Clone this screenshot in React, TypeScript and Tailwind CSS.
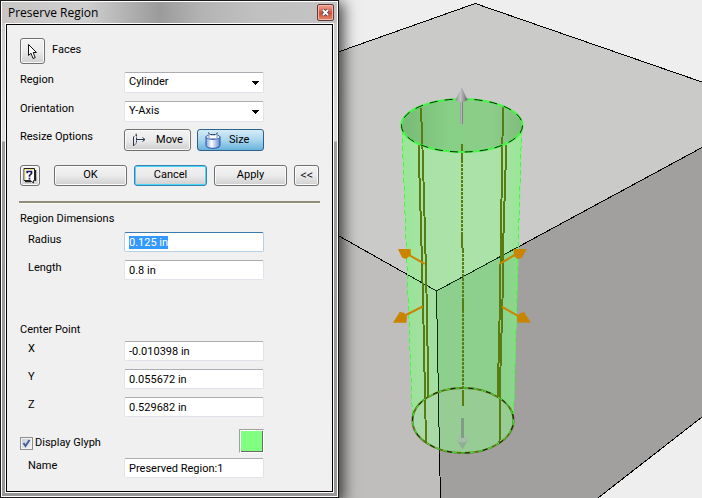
import { useEffect, useRef } from "react";
import type { ReactNode } from "react";

const fieldBorder =
  "h-5 w-full rounded-xs border border-[#e2e3ea] border-t-[#abadb3] bg-white px-1 text-[11px] leading-4 text-black outline-none";

const buttonFace =
  "flex items-center justify-center rounded-[3px] border border-[#707070] bg-linear-to-b from-[#f3f3f3] from-0% via-[#ebebeb] via-50% to-[#cfcfcf] text-[11px] text-black shadow-[inset_0_0_0_1px_#fafafa]";

function Row({ label, htmlFor, indent = false, children }: { label: string; htmlFor?: string; indent?: boolean; children: ReactNode }) {
  return (
    <div className="flex items-start">
      <label htmlFor={htmlFor} className={`w-[104px] shrink-0 leading-4 ${indent ? "pl-2" : ""}`}>
        {label}
      </label>
      <div className="w-[140px]">{children}</div>
    </div>
  );
}

function Choice({ id, options }: { id: string; options: string[] }) {
  return (
    <div className="relative">
      <select id={id} className="block h-[21px] w-full appearance-none rounded-xs border border-[#e2e3ea] border-t-[#abadb3] bg-white px-1 text-[11px] text-black outline-none">
        {options.map((o) => (
          <option key={o}>{o}</option>
        ))}
      </select>
      <svg viewBox="0 0 7 4" className="pointer-events-none absolute top-[9px] right-[5px] h-1 w-[7px]" aria-hidden="true">
        <path d="M0 0h7v1h-1v1h-1v1h-1v1h-1v-1h-1v-1h-1v-1h-1z" />
      </svg>
    </div>
  );
}

function CursorIcon() {
  return (
    <svg viewBox="0 0 11 17" className="h-[17px] w-[11px]" aria-hidden="true">
      <path d="M1.500 1.500V12.500L4 10.200L6 15.500L8.200 14.600L6.200 9.500H9.500Z" fill="#fff" stroke="#111" />
    </svg>
  );
}

function HelpIcon() {
  return (
    <svg viewBox="0 0 14 16" className="h-4 w-[14px] shrink-0" aria-hidden="true">
      <path d="M2 13.500H8M12.500 2V13" fill="none" stroke="#222" strokeWidth="1.500" />
      <path d="M1 .5H11.500V12.500H10.500V15L7.500 12.500H1Z" fill="#fff" stroke="#222" />
      <path d="M2 12V1.500H11" fill="none" stroke="#ece47c" />
      <path d="M4.200 5.200V3.500H8.500V5.500L6.500 7.500V8.700M6.500 9.800V11.500" fill="none" stroke="#15155c" strokeWidth="1.700" />
    </svg>
  );
}

function MoveIcon() {
  return (
    <svg viewBox="0 0 14 14" className="h-[14px] w-[14px] shrink-0" fill="none" stroke="#27364e" aria-hidden="true">
      <path d="M4.500 1L1.500 4v9L4.500 10z" strokeDasharray="2 1" />
      <path d="M1.500 4v9M4 6.500h9M10.500 4.500l2.500 2-2.500 2" />
    </svg>
  );
}

function SizeIcon() {
  return (
    <svg viewBox="0 0 16 17" className="h-[17px] w-4 shrink-0" aria-hidden="true">
      <defs>
        <linearGradient id="can">
          <stop offset="0" stopColor="#7fa3dc" />
          <stop offset=".4" stopColor="#fff" />
          <stop offset="1" stopColor="#5f86cf" />
        </linearGradient>
      </defs>
      <path d="M1 4.500V13.500C1 17.200 15 17.200 15 13.500V4.500" fill="url(#can)" stroke="#2852a4" />
      <ellipse cx="8" cy="5" rx="7" ry="2.500" fill="#dbe9fa" stroke="#4a70bb" />
      <path d="M4 1.500V5.500C4 7 12 7 12 5.500V1.500L10 3H6Z" fill="#fff" stroke="#8b9bb8" />
      <path d="M3 .5L5.500 2.500H10.500L13 .5" fill="none" stroke="#27364e" strokeDasharray="2 1" />
    </svg>
  );
}

function Scene() {
  return (
    <svg viewBox="339 0 363 498" preserveAspectRatio="xMinYMin slice" className="min-w-0 flex-1 bg-[#eeeeee]" role="img" aria-label="Block with a preserved cylinder region">
      <defs>
        <clipPath id="body">
          <path d="M401.500 125.500A60.500 26.500 0 0 1 522.500 125.500L513.500 420.500A50.500 32.500 0 0 1 412.500 420.500Z" />
        </clipPath>
        <clipPath id="base">
          <ellipse cx="463" cy="420.500" rx="50.500" ry="32.500" />
        </clipPath>
        <linearGradient id="sides">
          <stop offset="0" stopColor="#7cf07c" stopOpacity=".5" />
          <stop offset=".16" stopColor="#8fe88f" stopOpacity=".15" />
          <stop offset=".3" stopColor="#90e090" stopOpacity="0" />
          <stop offset=".78" stopColor="#90e090" stopOpacity="0" />
          <stop offset="1" stopColor="#7cf07c" stopOpacity=".5" />
        </linearGradient>
        <linearGradient id="mouth">
          <stop offset="0" stopColor="#78ba76" />
          <stop offset=".4" stopColor="#88cf87" />
          <stop offset=".75" stopColor="#8ccd8a" />
          <stop offset="1" stopColor="#80bc7e" />
        </linearGradient>
        <linearGradient id="metal">
          <stop offset="0" stopColor="#8d8b8f" />
          <stop offset=".4" stopColor="#c4c3c8" />
          <stop offset="1" stopColor="#69676c" />
        </linearGradient>
      </defs>

      <path d="M339 51.700L475.300 3.500L702 82V147.500L436.500 291L339 236Z" fill="#cacac9" />
      <path d="M339 236L436.500 291L440.500 498H339Z" fill="#bfbebd" />
      <path d="M436.500 291L702 147.500V417L598 498H440.500Z" fill="#a1a09e" />

      <g clipPath="url(#body)">
        <path d="M390 90H530V240.500L436.500 291L390 265Z" fill="#abe2a8" />
        <path d="M390 265L436.500 291L440.500 498H390Z" fill="#a3dfa1" />
        <path d="M436.500 291L530 240.500V498H440.500Z" fill="#8dcf8d" />
        <path d="M401 90H523V460H401Z" fill="url(#sides)" />
      </g>
      <g clipPath="url(#base)">
        <path d="M400 380H438.300L440 460H400Z" fill="#a8d9a7" />
        <path d="M438.300 380H520V460H440Z" fill="#97cc95" />
      </g>
      <ellipse cx="462" cy="125.500" rx="60.500" ry="26.500" fill="url(#mouth)" />

      <g fill="none" stroke="#000" strokeWidth="1" shapeRendering="crispEdges">
        <path d="M339 51.700L475.300 3.500L702 82M339 236L410 276M518 247L702 147.500M439.500 453L440.500 498M702 417L598 498" />
        <path d="M410 276L436.500 291L518 247M436.500 291L439.500 453" stroke="#0d2a10" />
      </g>

      <g fill="none" stroke="#587c12" strokeWidth="2" shapeRendering="crispEdges">
        <path d="M421 108L423 163L425 233L426.500 293L428.500 397M418.500 145L421 227L423 300L426 442" />
        <path d="M503 107L501 230L500 300L497.700 397M506.300 145L503.500 233L502.500 300L500.500 367L499.500 442" />
        <path d="M462 144V160M462 234V248M463 248V250M463 300V310M463 390V406" />
        <path d="M462 160V234M463 250V390" strokeDasharray="3 1" />
      </g>

      <g fill="none">
        <path d="M402 130L412.500 418M521.500 130L513.500 418" stroke="#48f548" strokeDasharray="5 3" shapeRendering="crispEdges" />
        <ellipse cx="462" cy="125.500" rx="60.500" ry="26.500" stroke="#47f547" strokeWidth="2" />
        <ellipse cx="462" cy="125.500" rx="60.500" ry="26.500" stroke="#0b250b" strokeDasharray="8 7" />
        <ellipse cx="463" cy="420.500" rx="50.500" ry="32.500" stroke="#5c7011" strokeWidth="2" />
        <ellipse cx="463" cy="420.500" rx="50.500" ry="32.500" stroke="#38ee38" strokeDasharray="5 4" />
        <ellipse cx="463" cy="420.500" rx="50.500" ry="32.500" stroke="#111b08" strokeDasharray="5 13" strokeDashoffset="-5" />
      </g>

      <g fill="#c98500" stroke="none">
        <path d="M398 249H410.500L411 255L406 259L402 257.500Z" />
        <path d="M526.700 249H513.500L514 256L517.500 259L522 257.700Z" />
        <path d="M393 322.700L399.700 312L404 312.700L407 317L406.300 322.700Z" />
        <path d="M531 322.700L524 312L519.500 313.500L517 317.500L517.700 322.500Z" />
        <path d="M408 254.500L424.700 263.800M515 254.800L499.700 263.800M404 316L422.700 306.500M501.700 306.700L520 317" fill="none" stroke="#c98500" strokeWidth="2" />
      </g>

      <path d="M460 101H463V124H460Z" fill="url(#metal)" />
      <path d="M461.500 87L467.500 100Q461.500 104 455.500 100Z" fill="url(#metal)" />
      <g opacity=".75">
        <path d="M457 440L462.500 449.500L468 440Q462.500 444 457 440Z" fill="#8da398" />
        <ellipse cx="462.500" cy="438.500" rx="5.500" ry="4" fill="#a8bcae" />
        <path d="M461 418H464V438H461Z" fill="#7b8e82" />
      </g>
    </svg>
  );
}

export default function App() {
  const radius = useRef<HTMLInputElement>(null);

  useEffect(() => {
    radius.current?.focus();
    radius.current?.select();
  }, []);

  return (
    <main className="flex min-h-screen items-stretch overflow-hidden bg-[#eeeeee] font-[Roboto,sans-serif] text-[11px] text-black">
      <section
        aria-label="Preserve Region"
        className="relative z-10 flex w-[339px] shrink-0 flex-col self-start border border-[#1c1a1b] bg-[linear-gradient(#cdc9c9_0,#dedcdc_140px,#a19d9d_141px,#989696_100%)] shadow-[2px_4px_14px_2px_rgba(0,0,0,0.75)]"
      >
        <div className="border border-white">
          <header className="flex h-[21px] items-center justify-between bg-[linear-gradient(90deg,#c9c5c5,#cfcfcf_25%,#9b9b9b_47%,#b4b4b4_60%,#c0c0c0_75%,#c4c4c4)] pr-[3px] pl-1.5">
            <h1 className="font-['Open_Sans',sans-serif] text-[12px] leading-4">Preserve Region</h1>
            <button type="button" aria-label="Close" className="flex h-[17px] w-[17px] items-center justify-center rounded-xs border border-[#5b3b3b] bg-linear-to-b from-[#f0a898] from-0% via-[#cf4a30] via-55% to-[#e08a70] shadow-[inset_0_0_0_1px_#f3b5a6]">
              <svg viewBox="0 0 9 9" className="h-[9px] w-[9px]" aria-hidden="true">
                <path d="M2 2L7 7M7 2L2 7" stroke="#4a4f63" strokeWidth="3.600" />
                <path d="M2 2L7 7M7 2L2 7" stroke="#fff" strokeWidth="1.800" />
              </svg>
            </button>
          </header>

          <div className="mx-[3px] mb-[3px] border border-white">
            <form className="flex flex-col border border-black bg-[#f0f0f0] py-[13px] pr-3 pl-[13px]" onSubmit={(e) => e.preventDefault()}>
              <div className="flex h-[26px] items-start gap-[7px]">
                <button type="button" id="faces" className={`${buttonFace} h-[26px] w-[25px]`}>
                  <CursorIcon />
                </button>
                <label htmlFor="faces" className="pt-1 leading-4">Faces</label>
              </div>

              <div className="mt-2 flex flex-col gap-2">
                <Row label="Region" htmlFor="region">
                  <Choice id="region" options={["Cylinder", "Box"]} />
                </Row>
                <Row label="Orientation" htmlFor="orientation">
                  <Choice id="orientation" options={["Y-Axis", "X-Axis", "Z-Axis"]} />
                </Row>
              </div>
              <div className="mt-[7px]">
                <Row label="Resize Options">
                  <div className="flex gap-1.5">
                    <button type="button" className={`${buttonFace} h-[22px] w-[67px] gap-2.5`}>
                      <MoveIcon />
                      Move
                    </button>
                    <button type="button" aria-pressed="true" className="flex h-[22px] w-[67px] items-center gap-2 rounded-[3px] border border-[#2c628b] bg-linear-to-b from-[#d5ebf8] via-[#a9d6ee] via-50% to-[#68b3db] pl-[7px] text-[11px]">
                      <SizeIcon />
                      Size
                    </button>
                  </div>
                </Row>
              </div>

              <div className="mt-3.5 flex h-[21px]">
                <button type="button" aria-label="Help" className={`${buttonFace} w-5`}>
                  <HelpIcon />
                </button>
                <div className="ml-3.5 flex gap-[7px]">
                  <button type="submit" className={`${buttonFace} w-[73px]`}>OK</button>
                  <button type="button" className="w-[73px] rounded-[3px] border border-[#3c7fb1] bg-linear-to-b from-[#f0f0f0] via-[#ebebeb] via-50% to-[#cfcfcf] text-[11px] shadow-[inset_0_0_0_1px_#46d8fb]">
                    Cancel
                  </button>
                  <button type="button" className={`${buttonFace} w-[73px]`}>Apply</button>
                </div>
                <button type="button" className={`${buttonFace} ml-[7px] w-[25px] font-['Noto_Sans',sans-serif]`}>&lt;&lt;</button>
              </div>

              <hr className="mt-[15px] -ml-px h-[3px] border-0 border-b border-[#fbfaf0] bg-[#8f8c7c]" />

              <fieldset className="mt-[7px] flex flex-col">
                <legend className="leading-4">Region Dimensions</legend>
                <div className="mt-[5px] flex flex-col gap-2">
                  <Row label="Radius" htmlFor="radius" indent>
                    <input ref={radius} id="radius" defaultValue="0.125 in" className="block h-5 w-full rounded-xs border border-[#b5cfe7] border-t-[#3d7bad] bg-white px-1 text-[11px] leading-4 text-black outline-none selection:bg-[#3399ff] selection:text-white" />
                  </Row>
                  <Row label="Length" htmlFor="length" indent>
                    <input id="length" defaultValue="0.8 in" className={`block ${fieldBorder}`} />
                  </Row>
                </div>
              </fieldset>

              <fieldset className="mt-[42px] flex flex-col">
                <legend className="leading-4">Center Point</legend>
                <div className="mt-[3px] flex flex-col gap-2">
                  <Row label="X" htmlFor="cx" indent>
                    <input id="cx" defaultValue="-0.010398 in" className={`block ${fieldBorder}`} />
                  </Row>
                  <Row label="Y" htmlFor="cy" indent>
                    <input id="cy" defaultValue="0.055672 in" className={`block ${fieldBorder}`} />
                  </Row>
                  <Row label="Z" htmlFor="cz" indent>
                    <input id="cz" defaultValue="0.529682 in" className={`block ${fieldBorder}`} />
                  </Row>
                </div>
              </fieldset>

              <div className="mt-3 flex h-6 w-[244px] items-end justify-between">
                <label className="flex items-center gap-0.5 pb-0.5 leading-4">
                  <span className="relative flex h-[13px] w-[13px]">
                    <input type="checkbox" defaultChecked className="peer h-[13px] w-[13px] appearance-none border border-[#8e8f8f] bg-linear-to-br from-[#c6ccd6] to-[#f5f6f8] shadow-[inset_0_0_0_1px_#f4f4f4]" />
                    <svg viewBox="0 0 13 13" className="pointer-events-none absolute inset-0 hidden h-[13px] w-[13px] peer-checked:block" aria-hidden="true">
                      <path d="M3.500 6L5.500 9L9.500 3" fill="none" stroke="#4a5f97" strokeWidth="2" />
                    </svg>
                  </span>
                  Display Glyph
                </label>
                <button type="button" aria-label="Glyph color" className="h-6 w-[25px] border border-t-[#a0a0a0] border-r-white border-b-white border-l-[#a0a0a0] bg-white pt-px pl-px">
                  <span className="block h-full w-full border-r border-b border-[#696969] bg-[#80ff80]" />
                </button>
              </div>

              <div className="mt-[5px]">
                <Row label="Name" htmlFor="name" indent>
                  <input id="name" defaultValue="Preserved Region:1" className={`block ${fieldBorder}`} />
                </Row>
              </div>
            </form>
          </div>
        </div>
      </section>
      <Scene />
    </main>
  );
}
